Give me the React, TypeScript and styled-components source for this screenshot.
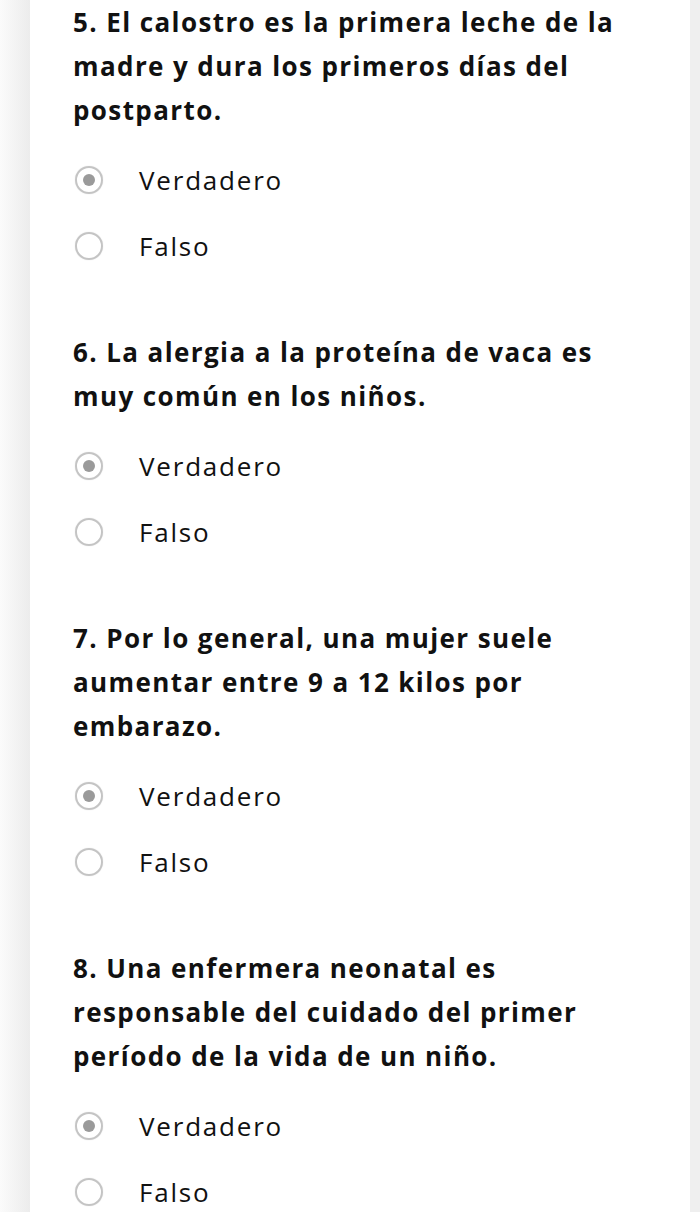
import React from "react";
import styled, { createGlobalStyle } from "styled-components";

const Global = createGlobalStyle`
  html, body { margin: 0; padding: 0; background: #efefef; }
  body { font-family: "Open Sans", Lato, sans-serif; color: #111; }
`;

const Page = styled.div`
  display: grid;
  grid-template-columns: 30px 660px 10px;
  min-height: 1212px;
  overflow: hidden;
`;

const LeftGutter = styled.div`
  background: linear-gradient(to right, #fbfbfb, #ececec);
`;

const RightGutter = styled.div`
  background: #efefef;
`;

const Card = styled.main`
  background: #ffffff;
  padding: 0 57px 0 43px;
  display: flex;
  flex-direction: column;
  gap: 51px;
`;

const Question = styled.section`
  display: flex;
  flex-direction: column;
  gap: 15px;
`;

const Title = styled.h2`
  margin: 0;
  font-size: 26px;
  line-height: 44px;
  font-weight: 700;
  color: #111;
  letter-spacing: 1.4px;
`;

const Options = styled.div`
  display: flex;
  flex-direction: column;
`;

const Option = styled.label`
  display: flex;
  align-items: center;
  height: 66px;
  font-size: 26px;
  font-weight: 400;
  color: #111;
  letter-spacing: 1.8px;
`;

const Radio = styled.span<{ $checked: boolean }>`
  box-sizing: border-box;
  width: 28px;
  height: 28px;
  margin-left: 2px;
  margin-right: 36px;
  border-radius: 50%;
  border: 2px solid #c4c4c4;
  box-shadow: 0 0 1px #d0d0d0;
  display: flex;
  align-items: center;
  justify-content: center;
  &::after {
    content: "";
    display: ${(p) => (p.$checked ? "block" : "none")};
    width: 12px;
    height: 12px;
    border-radius: 50%;
    background: #9a9a9a;
  }
`;

const questions = [
  "5. El calostro es la primera leche de la madre y dura los primeros días del postparto.",
  "6. La alergia a la proteína de vaca es muy común en los niños.",
  "7. Por lo general, una mujer suele aumentar entre 9 a 12 kilos por embarazo.",
  "8. Una enfermera neonatal es responsable del cuidado del primer período de la vida de un niño.",
];

export default function App() {
  return (
    <>
      <Global />
      <Page>
        <LeftGutter />
        <Card>
          {questions.map((q) => (
            <Question key={q}>
              <Title>{q}</Title>
              <Options>
                <Option>
                  <Radio $checked={true} />
                  Verdadero
                </Option>
                <Option>
                  <Radio $checked={false} />
                  Falso
                </Option>
              </Options>
            </Question>
          ))}
        </Card>
        <RightGutter />
      </Page>
    </>
  );
}
